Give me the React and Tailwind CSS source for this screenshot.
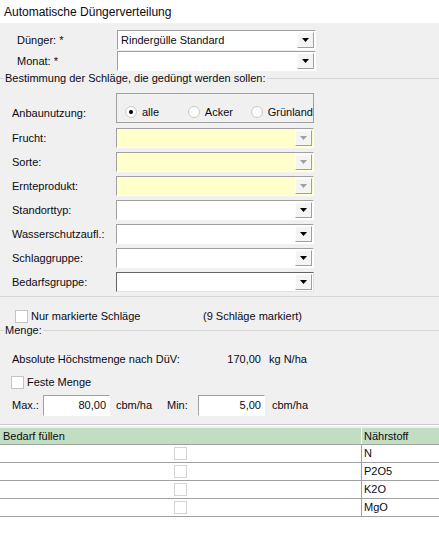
import React from "react";

const font = { fontFamily: '"Liberation Sans", Arial, sans-serif' };

function Arrow({ disabled }) {
  return (
    <div className="w-[17px] h-full flex items-center justify-center bg-[#f4f4f4] border-l border-t border-[#fdfdfd] border-r border-b border-r-[#a0a0a0] border-b-[#a0a0a0] box-border">
      <svg width="7" height="4" viewBox="0 0 7 4">
        <path d="M0 0h7L3.5 4z" fill={disabled ? "#a0a0a0" : "#000"} />
      </svg>
    </div>
  );
}

function Combo({ value, yellow, disabled, focused, width = "w-[198px]" }) {
  return (
    <div
      className={`${width} h-[20px] flex box-border border ${
        focused
          ? "border-t-[#646464] border-l-[#646464] border-r-[#e3e3e3] border-b-[#e3e3e3] border-[1.5px]"
          : "border-t-[#a0a0a0] border-l-[#a0a0a0] border-r-white border-b-white"
      } ${yellow ? "bg-[#ffffcc]" : "bg-white"}`}
    >
      <div className="flex-1 pl-[3px] flex items-center leading-none truncate">
        {value}
      </div>
      <div className="p-[1px] h-full box-border">
        <Arrow disabled={disabled} />
      </div>
    </div>
  );
}

function Row({ label, children, lx = "pl-[12px]" }) {
  return (
    <div className="flex items-center h-[20px]">
      <div className={`w-[116px] ${lx}`}>{label}</div>
      {children}
    </div>
  );
}

function Radio({ checked, label, width }) {
  return (
    <div className={`flex items-center gap-[5px] ${width || ""}`}>
      <div className="w-[12px] h-[12px] rounded-full border border-[#c8c8c8] bg-white flex items-center justify-center">
        {checked && <div className="w-[4px] h-[4px] rounded-full bg-black" />}
      </div>
      <span>{label}</span>
    </div>
  );
}

function Check({ light }) {
  return (
    <div
      className={`w-[13px] h-[13px] bg-white border ${
        light ? "border-[#d4d4d4]" : "border-[#c4c4c4]"
      }`}
    />
  );
}

function GroupHeader({ title }) {
  return (
    <div className="flex items-center h-[14px]">
      <div className="w-[4px] border-t border-[#d6d6d6]" />
      <span className="px-[1px]">{title}</span>
      <div className="flex-1 border-t border-[#d6d6d6]" />
    </div>
  );
}

export default function App() {
  const nutrients = ["N", "P2O5", "K2O", "MgO"];
  return (
    <div
      style={font}
      className="w-[439px] h-[533px] bg-[#f0f0f0] text-[11px] text-[#0a0a14] overflow-hidden flex flex-col"
    >
      {/* Titelzeile */}
      <div className="h-[23px] bg-white flex items-center pl-[4px] text-[12px]">
        Automatische Düngerverteilung
      </div>

      <div className="pt-[7px]">
        <Row label="Dünger: *" lx="pl-[17px]">
          <div className="ml-[1px]">
            <Combo value="Rindergülle Standard" width="w-[199px]" />
          </div>
        </Row>
        <div className="h-[1px]" />
        <Row label="Monat: *" lx="pl-[17px]">
          <div className="ml-[1px]">
            <Combo value="" width="w-[199px]" />
          </div>
        </Row>
      </div>

      <GroupHeader title="Bestimmung der Schläge, die gedüngt werden sollen:" />

      <div className="pt-[8px]">
        <div className="flex items-end h-[30px]">
          <div className="w-[116px] pl-[12px] pb-[2px]">Anbaunutzung:</div>
          <div className="w-[198px] h-[30px] border border-[#a0a0a0] flex items-end pb-[2px] pl-[8px] box-border">
            <Radio checked label="alle" width="w-[63px]" />
            <Radio label="Acker" width="w-[63px]" />
            <Radio label="Grünland" />
          </div>
        </div>

        <div className="flex flex-col gap-[4px] pt-[5px]">
          <Row label="Frucht:">
            <Combo yellow disabled />
          </Row>
          <Row label="Sorte:">
            <Combo yellow disabled />
          </Row>
          <Row label="Ernteprodukt:">
            <Combo yellow disabled />
          </Row>
          <Row label="Standorttyp:">
            <Combo />
          </Row>
          <Row label="Wasserschutzaufl.:">
            <Combo />
          </Row>
          <Row label="Schlaggruppe:">
            <Combo />
          </Row>
          <Row label="Bedarfsgruppe:">
            <Combo focused />
          </Row>
        </div>
      </div>

      <div className="mt-[4px] border-t border-[#d6d6d6]" />

      <div className="flex items-center h-[14px] mt-[12px]">
        <div className="pl-[15px] pr-[3px]">
          <Check />
        </div>
        <span className="w-[172px]">Nur markierte Schläge</span>
        <span>(9 Schläge markiert)</span>
      </div>

      <GroupHeader title="Menge:" />

      <div className="flex items-center h-[14px] mt-[15px] pl-[12px]">
        <span className="w-[211px]">Absolute Höchstmenge nach DüV:</span>
        <span className="w-[38px] text-right">170,00</span>
        <span className="pl-[8px]">kg N/ha</span>
      </div>

      <div className="flex items-center h-[14px] mt-[9px]">
        <div className="pl-[11px] pr-[3px]">
          <Check />
        </div>
        <span>Feste Menge</span>
      </div>

      <div className="flex items-center h-[21px] mt-[6px] pl-[12px]">
        <span className="w-[31px]">Max.:</span>
        <div className="w-[67px] h-[21px] bg-white border border-t-[#a0a0a0] border-l-[#a0a0a0] border-r-white border-b-white flex items-center justify-end pr-[3px] box-border">
          80,00
        </div>
        <span className="pl-[6px] w-[57px]">cbm/ha</span>
        <span className="w-[31px]">Min:</span>
        <div className="w-[67px] h-[21px] bg-white border border-t-[#a0a0a0] border-l-[#a0a0a0] border-r-white border-b-white flex items-center justify-end pr-[3px] box-border">
          5,00
        </div>
        <span className="pl-[7px]">cbm/ha</span>
      </div>

      <div className="mt-[8px] border-t border-[#c8c8c8]" />
      <div className="border-t border-white" />

      {/* Tabelle */}
      <div className="mt-[1px] flex-1 bg-white border-t border-[#f0f0f0]">
        <div className="flex h-[17px] border-b border-[#a0a0a0]">
          <div className="w-[361px] bg-[#c2dec2] pl-[3px] flex items-center">
            Bedarf füllen
          </div>
          <div className="w-[1px] bg-white" />
          <div className="flex-1 bg-[#c2dec2] pl-[2px] flex items-center">
            Nährstoff
          </div>
        </div>
        {nutrients.map((n) => (
          <div
            key={n}
            className="flex h-[18px] bg-white border-b border-[#a0a0a0] box-border"
          >
            <div className="w-[361px] flex items-center justify-center">
              <Check light />
            </div>
            <div className="w-[1px] bg-[#a0a0a0]" />
            <div className="flex-1 pl-[2px] flex items-center">{n}</div>
          </div>
        ))}
      </div>
    </div>
  );
}
